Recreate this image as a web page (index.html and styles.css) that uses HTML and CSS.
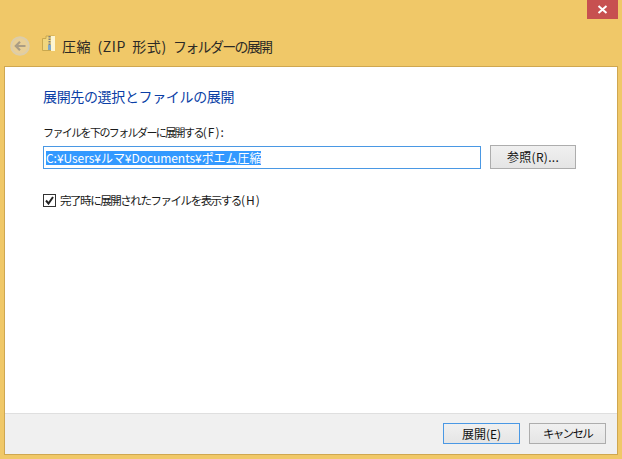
FILE: index.html
```html
<!DOCTYPE html>
<html lang="ja">
<head>
<meta charset="utf-8">
<title>圧縮 (ZIP 形式) フォルダーの展開</title>
<link rel="stylesheet" href="styles.css">
</head>
<body>
<div class="window">
  <div class="titlebar">
    <div class="close">
      <svg width="11" height="9" viewBox="0 0 11 9"><path d="M1.5 1 L9.5 8 M9.5 1 L1.5 8" stroke="#fff" stroke-width="2" fill="none"/></svg>
    </div>
  </div>
  <div class="navbar">
    <svg class="back" width="20" height="20" viewBox="0 0 20 20">
      <circle cx="10" cy="10" r="8.8" fill="#e9cf96" stroke="#dccdaa" stroke-width="2"/>
      <path d="M15.5 10 H6 M10 5.8 L5.8 10 L10 14.2" stroke="#ab9d84" stroke-width="2.2" fill="none"/>
    </svg>
    <svg class="zip" width="14" height="17" viewBox="0 0 14 17">
      <path d="M0.5 3.5 H4 V1 H12.5 V15.5 H0.5 Z" fill="#f1d67e" stroke="#c9a84f"/>
      <path d="M9 1 H13 V16 H9 Z" fill="#fdf6d2"/>
      <path d="M7.5 1 V15" stroke="#7e7e7e" stroke-width="2" stroke-dasharray="1.5 1"/>
      <rect x="6" y="10" width="3" height="5" fill="#7fa8c9"/>
    </svg>
    <span class="wintitle"><span class="title-latin">圧縮 (ZIP 形式) </span><span class="title-kana">フォルダーの展開</span></span>
  </div>
  <div class="panel">
    <div class="content">
      <h1 class="heading">展開先の選択とファイルの展開</h1>
      <div class="label">ファイルを下のフォルダーに展開する<span class="key">(F):</span></div>
      <div class="pathrow">
        <div class="pathinput"><span class="selected">C:¥Users¥ルマ¥Documents¥ポエム圧縮</span></div>
        <button class="btn browse">参照(R)...</button>
      </div>
      <div class="checkrow">
        <span class="checkbox">
          <svg width="9" height="9" viewBox="0 0 9 9"><path d="M1 4.5 L3.5 7.5 L8 1" stroke="#222" stroke-width="2" fill="none"/></svg>
        </span>
        <span class="checklabel">完了時に展開されたファイルを表示する<span class="key">(H)</span></span>
      </div>
    </div>
    <div class="footer">
      <button class="btn primary">展開(E)</button>
      <button class="btn cancel">キャンセル</button>
    </div>
  </div>
</div>
</body>
</html>
```
FILE: styles.css
```css
* { box-sizing: border-box; }
html, body { margin: 0; padding: 0; }
body {
  width: 622px;
  height: 459px;
  overflow: hidden;
  background: #f0c868;
  font-family: "Noto Sans CJK JP", "Noto Sans", sans-serif;
  color: #1a1a1a;
}
.window {
  width: 622px;
  height: 459px;
  display: flex;
  flex-direction: column;
  padding: 0 4px 4px 4px;
}
.titlebar {
  height: 30px;
  display: flex;
  justify-content: flex-end;
  flex: none;
}
.close {
  width: 31px;
  height: 19px;
  background: #c75050;
  display: flex;
  align-items: center;
  justify-content: center;
}
.navbar {
  height: 36px;
  flex: none;
  display: flex;
  align-items: center;
  padding: 0 0 5px 6px;
}
.back { margin-right: 12px; flex: none; }
.zip { margin-right: 6px; margin-top: -4px; flex: none; }
.wintitle {
  font-size: 14px;
  color: #2c2a26;
  white-space: pre;
}
.title-latin { letter-spacing: 0.6px; word-spacing: 2.5px; }
.title-kana { letter-spacing: -1.7px; }
.panel {
  flex: 1;
  min-height: 0;
  display: flex;
  flex-direction: column;
  background: #fff;
  border: 1px solid #cfa750;
}
.content {
  flex: 1;
  padding: 19px 40px 0 38px;
}
.heading {
  margin: 0;
  font-size: 14px;
  font-weight: 400;
  line-height: 20px;
  letter-spacing: -0.35px;
  color: #0b3fa6;
}
.label {
  margin-top: 17px;
  font-size: 11px;
  line-height: 18px;
  letter-spacing: -1.6px;
}
.key {
  font-size: 12px;
  letter-spacing: 1px;
}
.pathrow {
  display: flex;
  align-items: flex-end;
  margin-top: 4px;
  gap: 9px;
}
.pathinput {
  width: 438px;
  height: 23px;
  flex: none;
  border: 1px solid #4a98e4;
  padding: 0 2px;
  background: #fff;
  display: flex;
  align-items: center;
}
.selected {
  display: inline-block;
  height: 14px;
  background: #3399ff;
  color: #fff;
  font-size: 12px;
  line-height: 14px;
  letter-spacing: -0.05px;
  white-space: nowrap;
}
.btn {
  width: 77px;
  height: 21px;
  font-family: inherit;
  font-size: 12px;
  line-height: 1;
  padding: 0;
  color: #111;
  background: linear-gradient(#f0f0f0, #e5e5e5);
  border: 1px solid #adadad;
}
.browse { width: 86px; height: 24px; letter-spacing: 0.3px; }
.primary { border-color: #4a98e4; }
.cancel { font-size: 11.5px; letter-spacing: -1.7px; }
.checkrow {
  display: flex;
  align-items: center;
  margin-top: 22px;
  gap: 4px;
}
.checkbox {
  width: 13px;
  height: 13px;
  border: 1px solid #333;
  background: #fff;
  display: flex;
  align-items: center;
  justify-content: center;
}
.checklabel {
  font-size: 11.5px;
  line-height: 18px;
  letter-spacing: -1.45px;
}
.footer {
  height: 41px;
  flex: none;
  display: flex;
  justify-content: flex-end;
  align-items: center;
  gap: 9px;
  padding-right: 11px;
  padding-bottom: 1px;
  background: #f0f0f0;
  border-top: 1px solid #dfdfdf;
}
```
